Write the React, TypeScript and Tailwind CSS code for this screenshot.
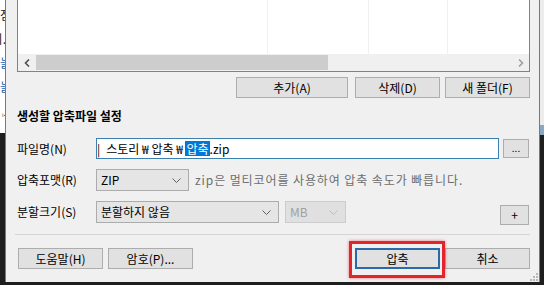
import React from "react";

function Btn({ children, className = "" }: { children: React.ReactNode; className?: string }) {
  return (
    <div
      className={`flex items-center justify-center h-[21px] border border-[#adadad] bg-[#e1e1e1] text-[12px] leading-none text-black ${className}`}
    >
      {children}
    </div>
  );
}

function Chevron({ color = "#606060" }: { color?: string }) {
  return (
    <svg width="9" height="5" viewBox="0 0 9 5">
      <polyline points="0.5,0.5 4.5,4.5 8.5,0.5" fill="none" stroke={color} strokeWidth="1" />
    </svg>
  );
}

export default function App() {
  return (
    <div className="w-[544px] h-[285px] overflow-hidden bg-[#1e1e1e] flex flex-col font-['Malgun_Gothic','Noto_Sans_CJK_KR','Noto_Sans',sans-serif] text-[12px] text-black">
      <div className="flex h-[282px]">
        {/* left background window strip */}
        <div className="w-[5px] flex flex-col">
          <div className="h-[133px] bg-white flex flex-col overflow-hidden">
            <div className="h-[6px]" />
            <div className="h-[18px] flex justify-end overflow-hidden whitespace-nowrap text-[12px] leading-[18px] text-[#222]">
              <span className="-mr-[6px]">점</span>
            </div>
            <div className="h-[6px]" />
            <div className="h-[18px] flex justify-end overflow-hidden whitespace-nowrap text-[12px] leading-[18px] text-[#222]">
              <span className="-mr-[1px]">티.</span>
            </div>
            <div className="h-[6px]" />
            <div className="h-[18px] flex justify-end overflow-hidden whitespace-nowrap text-[12px] leading-[18px] text-[#1a64b0]">
              <span className="-mr-[6px]">늘</span>
            </div>
            <div className="h-[6px]" />
            <div className="h-[18px] flex justify-end overflow-hidden whitespace-nowrap text-[12px] leading-[18px] text-[#1a64b0]">
              <span className="-mr-[6px]">늘</span>
            </div>
            <div className="h-[10px]" />
            <div className="h-[14px] flex justify-end overflow-hidden whitespace-nowrap text-[9px] leading-[14px] text-[#444]">
              <span className="-mr-[1px]">ᵢ.</span>
            </div>
          </div>
          <div className="flex-1 bg-[#1e1e1e]" />
        </div>

        {/* dialog */}
        <div className="relative w-[535px] border-x border-[#7a7a7a] bg-[#f0f0f0] pl-[11px] pr-[9px] flex flex-col">
          {/* list box */}
          <div className="h-[72px] border-x border-b border-[#828282] bg-white flex flex-col">
            <div className="h-[54px] flex">
              <div className="w-[250px] border-r border-[#f0f0f0]" />
              <div className="w-[101px] border-r border-[#f0f0f0]" />
              <div className="w-[79px] border-r border-[#f0f0f0]" />
              <div className="flex-1" />
            </div>
            <div className="h-[17px] bg-[#f0f0f0] flex items-stretch">
              <div className="w-[18px] flex items-center justify-center">
                <svg width="6" height="8" viewBox="0 0 6 8">
                  <polyline points="5,0.5 1.5,4 5,7.5" fill="none" stroke="#505050" strokeWidth="1.6" />
                </svg>
              </div>
              <div className="w-[292px] my-px bg-[#cdcdcd]" />
              <div className="flex-1" />
              <div className="w-[17px] flex items-center justify-center">
                <svg width="6" height="8" viewBox="0 0 6 8">
                  <polyline points="1,0.5 4.5,4 1,7.5" fill="none" stroke="#a0a0a0" strokeWidth="1.6" />
                </svg>
              </div>
            </div>
          </div>

          {/* action buttons */}
          <div className="mt-[5px] flex justify-end">
            <Btn className="w-[112px]">추가(A)</Btn>
            <Btn className="w-[85px] ml-[7px]">삭제(D)</Btn>
            <Btn className="w-[85px] ml-[5px]">새 폴더(F)</Btn>
          </div>

          {/* title */}
          <div className="mt-[10px] h-[16px] leading-[16px] font-bold text-[12px]">생성할 압축파일 설정</div>

          {/* file name */}
          <div className="mt-[14px] h-[21px] flex items-center">
            <div className="w-[79px]">파일명(N)</div>
            <div className="w-[403px] h-[21px] border border-[#3c7fb1] bg-white flex items-center whitespace-nowrap leading-none">
              <span className="mr-[6px]">|</span>
              <span>스토리</span>
              <span className="inline-block w-[12px] text-center">₩</span>
              <span>압축</span>
              <span className="inline-block w-[12px] text-center">₩</span>
              <span className="bg-[#0078d7] text-white h-[15px] px-[1px] flex items-center">압축</span>
              <span>.zip</span>
            </div>
            <div className="ml-[4px] w-[26px] h-[19px] border border-[#adadad] bg-[#e1e1e1] flex items-end justify-center pb-[4px] text-[10px] leading-none">
              ...
            </div>
          </div>

          {/* format */}
          <div className="mt-[10px] h-[22px] flex items-center">
            <div className="w-[79px]">압축포맷(R)</div>
            <div className="w-[93px] h-[22px] border border-[#acacac] bg-[#e5e5e5] flex items-center justify-between pl-[4px] pr-[7px]">
              <span className="leading-none">ZIP</span>
              <Chevron />
            </div>
            <div className="ml-[6px] text-[#6d6d6d] whitespace-nowrap leading-none tracking-[0.9px]">
              zip은 멀티코어를 사용하여 압축 속도가 빠릅니다.
            </div>
          </div>

          {/* split */}
          <div className="mt-[10px] h-[24px] flex items-start">
            <div className="w-[79px] h-[22px] flex items-center">분할크기(S)</div>
            <div className="w-[183px] h-[22px] border border-[#acacac] bg-[#e5e5e5] flex items-center justify-between pl-[4px] pr-[7px]">
              <span className="leading-none">분할하지 않음</span>
              <Chevron />
            </div>
            <div className="ml-[6px] w-[61px] h-[22px] border border-[#cccccc] bg-[#e0e0e0] flex items-center justify-between pl-[4px] pr-[7px] text-[#a0a0a0]">
              <span className="leading-none">MB</span>
              <Chevron color="#bdbdbd" />
            </div>
            <div className="flex-1" />
            <div className="mt-[4px] mr-[1px] w-[29px] h-[20px] border border-[#adadad] bg-[#e1e1e1] flex items-center justify-center text-[12px] leading-none">
              +
            </div>
          </div>

          {/* separator */}
          <div className="mt-[9px] -ml-[2px] h-px bg-[#d5d5d5]" />

          {/* bottom buttons */}
          <div className="mt-[13px] flex">
            <Btn className="w-[85px] ml-[1px]">도움말(H)</Btn>
            <Btn className="w-[85px] ml-[5px]">암호(P)...</Btn>
            <div className="flex-1" />
            <div className="w-[85px] h-[21px] border-2 border-[#2a6aa8] bg-[#e1e1e1] flex items-center justify-center leading-none">
              압축
            </div>
            <Btn className="w-[85px] ml-[5px]">취소</Btn>
          </div>

          {/* annotation highlight */}
          <div className="absolute left-[343px] top-[241px] w-[96px] h-[37px] border-[3px] border-[#e0262c] shadow-[0_0_3px_rgba(224,38,44,0.6)] pointer-events-none" />

          {/* resize grip */}
          <svg className="absolute right-[1px] bottom-[1px]" width="8" height="8" viewBox="0 0 8 8">
            <rect x="6" y="0" width="2" height="2" fill="#b8b8b8" />
            <rect x="3" y="3" width="2" height="2" fill="#b8b8b8" />
            <rect x="6" y="3" width="2" height="2" fill="#b8b8b8" />
            <rect x="0" y="6" width="2" height="2" fill="#b8b8b8" />
            <rect x="3" y="6" width="2" height="2" fill="#b8b8b8" />
            <rect x="6" y="6" width="2" height="2" fill="#b8b8b8" />
          </svg>
        </div>

        {/* right background strip */}
        <div className="flex-1 flex flex-col">
          <div className="h-[125px] bg-[#ececec]" />
          <div className="h-[10px] bg-[#8aa7c2]" />
          <div className="flex-1 bg-[#1e1e1e]" />
        </div>
      </div>
      <div className="flex-1 bg-[#1e1e1e]" />
    </div>
  );
}
